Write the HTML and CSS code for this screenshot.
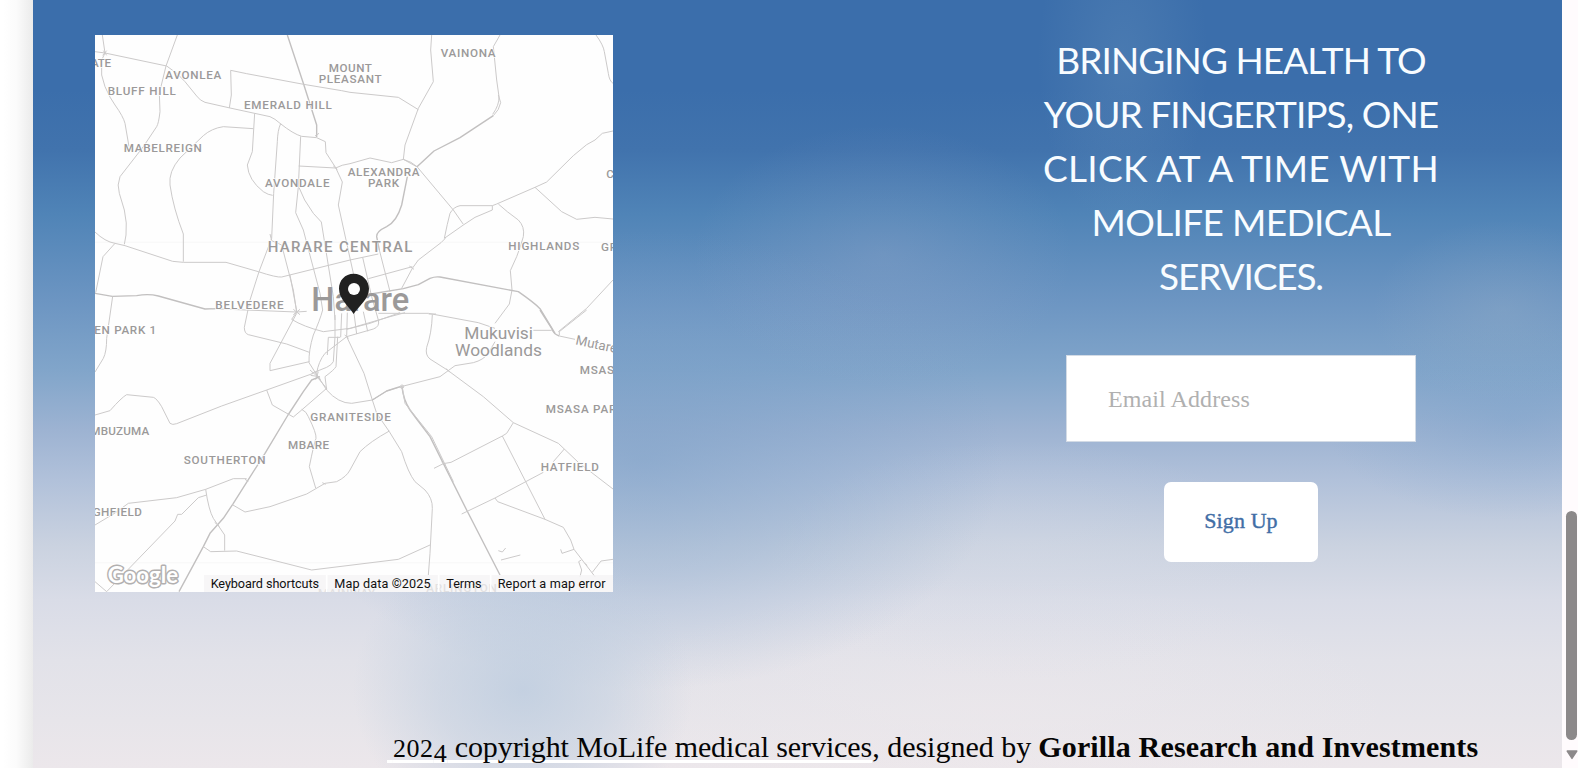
FILE: index.html
```html
<!DOCTYPE html>
<html lang="en">
<head>
<meta charset="utf-8">
<title>MoLife Medical Services</title>
<link rel="stylesheet" href="styles.css">
</head>
<body>
<div class="gutter"></div>
<main class="page">
  <section class="contact">
    <svg class="map" viewBox="15 15 1554 1671" role="img" aria-label="Map of Harare">
      <rect class="land" x="15" y="15" width="1554" height="1671"/>
      <path class="seam" d="M15 637H1569M15 1598H1569"/>
      <!-- north-west roads -->
      <g class="road">
        <path d="M37 15L45 69L35 90V135L45 170Q60 205 75 225Q100 260 105 280L117 350"/>
        <path d="M15 65L45 69L230 108Q265 130 285 155L320 198Q330 212 345 217L420 234L540 260Q555 266 570 280Q610 312 635 319L680 323L706 335L708 368L737 413L757 456L745 525L790 730L805 800"/>
        <path d="M262 15L228 108L208 190L210 245Q206 280 200 290L160 350L90 440Q80 465 88 490L103 540Q112 580 108 615L103 643"/>
        <path class="wide" d="M592 15L641 163L680 285V321"/>
        <path d="M418 234L424 195L422 121L470 131L641 163L755 182L780 187L925 202L985 239"/>
        <path d="M494 250L487 365L472 405Q475 450 520 485Q535 495 548 496"/>
        <path d="M490 296L400 290Q365 295 340 317L270 384Q235 425 240 465Q250 535 280 612V695"/>
        <path d="M572 281Q563 300 562 335L551 490L545 625L507 725L480 810L463 892Q463 910 475 914L590 942L658 967"/>
        <path d="M632 319L625 470L617 548L640 600L690 790L698 840Q690 870 670 915Q656 960 657 998L690 1050"/>
        <path d="M626 408L737 414Q755 404 780 401L840 384L905 398L940 388L980 410"/>
        <path d="M626 470Q640 510 670 550L694 576L730 800L735 870"/>
        <path d="M15 606Q45 635 75 640L105 647L248 694L280 697H408L505 725Q560 743 575 741L780 690L865 672"/>
        <path d="M75 640L39 680L17 788"/>
        <path class="wide" d="M15 790L67 799L140 797Q175 790 205 798L345 837L375 836"/>
        <path d="M365 836L620 846L650 844"/>
        <path d="M68 799L50 925Q50 965 40 985L15 1026"/>
        <path d="M540 612L545 632L575 645L610 780L620 846L605 868Q640 890 700 905L780 895L900 860L945 848"/>
        <path d="M40 62l10 14M50 62L38 76M610 838l20 16M630 838l-20 16M675 318l12-8M730 408l12 10"/>
      </g>
      <!-- north-east roads -->
      <g class="road" transform="translate(780 0)">
        <path d="M245 15L242 60L250 155L205 235L165 345L160 388Q185 395 201 410L310 540L340 583"/>
        <path d="M450 15L430 50L440 150L447 200Q448 225 428 253"/>
        <path d="M445 195L452 218Q448 240 430 257"/>
        <path class="wide" d="M430 257L330 323L252 363L201 410"/>
        <path d="M738 15Q760 45 763 65L775 130Q778 153 789 160"/>
        <path class="wide" d="M172 440L155 525Q140 575 110 590Q78 605 80 620L88 660"/>
        <path d="M88 660L120 785"/>
        <path d="M789 303L757 310L735 330L710 344L670 377L590 456L555 472L440 522L427 527H330Q310 531 300 550Q292 580 283 625L340 585L375 562L427 540V527"/>
        <path d="M286 625L273 638L205 690L187 715L155 775"/>
        <path d="M555 472L635 545L680 568L735 562L789 567"/>
        <path d="M445 522Q470 545 505 570Q525 590 520 620Q510 655 500 680L481 722L486 780L478 822L435 880"/>
        <path class="wide" d="M45 795L160 776L205 764L240 745Q255 739 270 741L505 785Q555 820 570 836L615 910"/>
        <path d="M789 750L710 835L625 905"/>
        <path d="M187 710L55 746"/>
      </g>
      <!-- city centre -->
      <g class="road" transform="translate(600 600)">
        <path d="M0 135L20 243"/>
        <path d="M218 82L245 200L265 270Q270 290 250 297L170 320L105 370Q85 395 80 430"/>
        <path d="M192 250L200 312M220 245L233 304M155 250L152 322M172 248L170 320M135 255V320L130 395Q125 405 110 412L65 430"/>
        <path d="M143 320L138 410Q132 420 105 440L110 480"/>
        <path d="M150 322H115L112 375"/>
        <path d="M170 298L240 280L330 248M185 188L145 200"/>
        <path d="M170 320L222 430L247 510L260 550L298 605"/>
        <path d="M60 420l32 28M62 436l25 4M85 425l-8 24M358 108l14 10M164 315l12 10"/>
      </g>
      <!-- south-west roads -->
      <g class="road" transform="translate(0 840)">
        <path class="wide" d="M690 200L665 210L640 245L594 315L525 430L430 580L400 625L360 670L340 710L267 845"/>
        <path d="M620 10L540 160V182L658 155"/>
        <path d="M15 315L60 302Q95 262 110 254L190 262Q200 265 215 290L240 340Q247 346 260 341L395 288L530 240L670 190"/>
        <path d="M530 240L547 285L610 321L635 300L710 235L685 205"/>
        <path d="M675 185L710 240Q745 280 785 280L847 270L890 243L937 229L1050 200L1095 167L1150 158Q1180 150 1195 130L1215 95"/>
        <path d="M635 298Q650 305 655 320Q680 370 678 385Q672 400 658 470L677 534"/>
        <path d="M427 584L465 606L540 590L650 552L705 520L740 515Q770 500 780 480L810 425Q840 395 898 363"/>
        <path d="M470 506H430L347 538L260 563L115 580L75 609L15 645"/>
        <path d="M350 555L325 563L275 613H263L255 633L50 845L15 815"/>
        <path d="M347 538Q356 600 370 625L404 675V722"/>
        <path d="M340 710L362 725L440 723L665 780L925 748L1020 705"/>
        <path d="M465 508l10 6M374 637l14 12M697 518l10 5"/>
      </g>
      <!-- south-east roads -->
      <g class="road" transform="translate(780 840)">
        <path class="wide" d="M570 0L605 55Q610 72 628 78"/>
        <path d="M628 78L675 88"/>
        <path d="M628 75V65L710 0M550 61H605"/>
        <path d="M85 10H235L385 38L435 55"/>
        <path d="M247 14Q245 70 230 112Q225 135 240 147L292 180L400 260L490 338L625 400L685 457L789 537"/>
        <path d="M490 338L470 370L457 378L303 457L280 461L252 475"/>
        <path class="wide" d="M156 230Q160 270 180 300L200 327L240 380L280 460L350 600L450 795"/>
        <path d="M156 230L165 280L245 380L310 515"/>
        <path class="wide" d="M67 270L110 243L150 230"/>
        <path d="M457 378L585 628"/>
        <path d="M335 612L435 564L580 487M610 455L643 417M435 564L443 575L585 628L640 652L662 690L672 718L636 730L632 718"/>
        <path d="M118 365L155 425Q175 490 195 515L225 540Q248 565 247 595L240 730L235 795"/>
        <path d="M672 718L735 800M686 755L695 780L690 800M789 748L753 753L727 787M445 722l12 4l10-12M453 750L511 735M686 755l8-5M705 760l6 6"/>
        <circle cx="156" cy="230" r="5"/><path d="M236 12h22M288 176l10 9M275 456l12 9"/>
      </g>
      <g class="suburb">
        <text x="3" y="110" textLength="63">ATE</text>
        <text x="226" y="146" textLength="170">AVONLEA</text>
        <text x="53" y="196" textLength="207">BLUFF HILL</text>
        <text x="716" y="125" textLength="132">MOUNT</text>
        <text x="686" y="159" textLength="191">PLEASANT</text>
        <text x="1052" y="82" textLength="167">VAINONA</text>
        <text x="462" y="237" textLength="266">EMERALD HILL</text>
        <text x="101" y="366" textLength="237">MABELREIGN</text>
        <text x="525" y="472" textLength="196">AVONDALE</text>
        <text x="773" y="438" textLength="218">ALEXANDRA</text>
        <text x="834" y="472" textLength="96">PARK</text>
        <text x="1549" y="444">C</text>
        <text x="1255" y="660" textLength="215">HIGHLANDS</text>
        <text x="1533" y="663">GR</text>
        <text x="376" y="837" textLength="207">BELVEDERE</text>
        <text x="13" y="912" textLength="188">EN PARK 1</text>
        <text x="1469" y="1032">MSAS</text>
        <text x="1367" y="1149">MSASA PAR</text>
        <text x="1" y="1214" textLength="179">MBUZUMA</text>
        <text x="661" y="1173" textLength="244">GRANITESIDE</text>
        <text x="594" y="1256" textLength="126">MBARE</text>
        <text x="281" y="1301" textLength="248">SOUTHERTON</text>
        <text x="1352" y="1323" textLength="177">HATFIELD</text>
        <text x="8" y="1457" textLength="150">GHFIELD</text>
        <text x="684" y="1702" textLength="174">MAINWAY</text>
        <text x="1009" y="1686" textLength="214">ARLINGTON</text>
      </g>
      <text class="district" x="533" y="667" textLength="437">HARARE CENTRAL</text>
      <text class="city" x="664" y="843" textLength="294" lengthAdjust="spacingAndGlyphs">Harare</text>
      <g class="park">
        <text x="1123" y="926" textLength="206">Mukuvisi</text>
        <text x="1095" y="978" textLength="261">Woodlands</text>
        <text class="street" transform="translate(1455 943) rotate(12)">Mutare</text>
      </g>
      <path class="pin" d="M791 731C765 731 747 751 747 776C747 807 776 828 791 852C806 828 837 807 837 776C837 751 817 731 791 731Z"/>
      <circle class="pin-eye" cx="792" cy="777" r="18"/>
      <text class="brand" x="53" y="1658" textLength="211" lengthAdjust="spacingAndGlyphs">Google</text>
      <path class="strip" d="M342 1635H1569V1686H342Z"/>
      <path class="gap" d="M710 1635V1686M1046 1635V1686M1202 1635V1686"/>
      <g class="legal">
        <text x="362" y="1675" textLength="325">Keyboard shortcuts</text>
        <text x="733" y="1675" textLength="289">Map data ©2025</text>
        <text x="1069" y="1675" textLength="106">Terms</text>
        <text x="1223" y="1675" textLength="324">Report a map error</text>
      </g>
    </svg>
    <form class="signup">
      <h2 class="headline">
        <span class="l1">BRINGING HEALTH TO</span>
        <span class="l2">YOUR FINGERTIPS, ONE</span>
        <span class="l3">CLICK AT A TIME WITH</span>
        <span class="l4">MOLIFE MEDICAL</span>
        <span class="l5">SERVICES.</span>
      </h2>
      <div class="field">Email Address</div>
      <div class="button">Sign Up</div>
    </form>
  </section>
  <footer class="footer"><span class="copy">&#8201;<span class="old">202</span><span class="old low">4</span> copyright MoLife medical services</span><span class="by">, designed by</span> <b class="credit">Gorilla Research and Investments</b></footer>
</main>
<div class="scrollbar"><div class="thumb"></div><svg class="arrow" viewBox="0 0 12 10"><path d="M1.2 1H10.8L6 8.4Z"/></svg></div>
</body>
</html>
```
FILE: styles.css
```css
* { box-sizing: border-box; }
body { margin: 0; display: flex; width: 1578px; height: 768px; overflow: hidden; background: #fff; }
.gutter { width: 33px; background: linear-gradient(90deg, #fff 8%, #fbfbfb 50%, #f3f3f3 75%, #ebebeb); }
.page {
  width: 1529px; display: flex; flex-direction: column;
  background:
    radial-gradient(ellipse 85px 170px at 1090px 60px, rgba(120,160,195,.24), transparent),
    radial-gradient(ellipse 190px 130px at 850px 255px, rgba(165,175,205,.25), transparent),
    radial-gradient(ellipse 130px 90px at 1470px 310px, rgba(160,180,200,.28), transparent),
    radial-gradient(ellipse 190px 100px at 1480px 420px, rgba(110,155,200,.3), transparent),
    radial-gradient(ellipse 170px 150px at 490px 690px, rgba(185,202,222,.75), rgba(190,205,223,.5) 50%, transparent),
    radial-gradient(ellipse 360px 230px at 610px 460px, rgba(115,155,197,.5), rgba(120,158,200,.3) 50%, transparent),
    radial-gradient(ellipse 260px 120px at 990px 560px, rgba(215,220,231,.3), transparent),
    radial-gradient(ellipse 400px 130px at 960px 710px, rgba(238,233,236,.5), transparent),
    linear-gradient(#3b6eab 0, #3b6eab 90px, #4173ad 150px, #5084b7 215px, #6c95c2 300px, #81a5ca 370px, #9db3d2 430px, #b1c1da 480px, #cad2e0 545px, #d9dce7 600px, #e2e2e9 660px, #e7e5ea 720px, #ece7eb 768px);
}
.contact { display: flex; justify-content: space-between; padding: 35px 124px 0 62px; height: 720px; }
.map { width: 518px; height: 557px; display: block; }
.land { fill: #fefefe; }
.seam { stroke: #f5f5f5; stroke-width: 2; }
.road { fill: none; stroke: #cccaca; stroke-width: 3; stroke-linejoin: round; }
.road .wide { stroke: #c2c0c0; stroke-width: 4.2; }
.map text { font-family: Roboto, sans-serif; fill: #9b9999; }
.suburb text, .district, .park text { stroke: #fefefe; stroke-width: 4; paint-order: stroke; }
.map .suburb { font-size: 35px; font-weight: 500; letter-spacing: 2.4px; }
.map .district { font-size: 45px; font-weight: 500; letter-spacing: 3px; }
.map .city { font-size: 98px; font-weight: 500; }
.map .park { font-size: 52px; }
.map .street { font-size: 40px; }
.pin { fill: #212121; }
.pin-eye { fill: #fff; }
.map .brand { font-family: Lato, sans-serif; font-weight: 700; font-size: 68px; fill: #fff; stroke: #b2b0b0; stroke-width: 9; paint-order: stroke; stroke-linejoin: round; }
.strip { fill: #f5f4f5; fill-opacity: .78; }
.gap { stroke: #fff; stroke-width: 5; }
.map .legal text { font-size: 38px; fill: #111; }

.signup { width: 394px; display: flex; flex-direction: column; align-items: center; }
.headline { margin: -2px 0 0; font: 400 37px/54px Lato, sans-serif; color: #f8fcff; text-align: center; white-space: nowrap; }
.headline span { display: block; }
.l1 { letter-spacing: -.97px; }
.l2 { letter-spacing: -.93px; }
.l3 { letter-spacing: .25px; }
.l4 { letter-spacing: -.65px; }
.l5 { letter-spacing: -1.15px; }
.field { width: 350px; height: 87px; margin-top: 52px; padding-left: 41px; border: 1px solid #d3dbe5; background: #fff; font: 24px/87px "Liberation Serif", serif; letter-spacing: .1px; color: #b0b0b0; }
.button { width: 154px; height: 80px; margin-top: 40px; border-radius: 7px; background: #fff; color: #426ea6; font: 22px/78px "Liberation Serif", serif; letter-spacing: .1px; -webkit-text-stroke: .4px #426ea6; text-align: center; }
.footer { display: flex; align-items: baseline; padding: 2px 0 0 354px; font: 30px/50px "Liberation Serif", serif; color: #050505; white-space: pre; height: 48px; }
.copy { letter-spacing: -.1px; text-decoration: underline; text-decoration-color: #fff; text-decoration-thickness: 3px; text-underline-offset: 3px; text-decoration-skip-ink: none; }
.old { font-size: 26px; letter-spacing: .6px; }
.low { position: relative; top: 5px; }
.credit { margin-left: 7px; letter-spacing: .15px; }
.scrollbar { width: 16px; height: 768px; padding: 511px 1px 0 4px; background: #fffbfd; }
.thumb { height: 229px; border-radius: 6px; background: #8c898a; }
.arrow { display: block; width: 12px; height: 10px; margin-top: 10px; fill: #8c898a; stroke: #8c898a; stroke-width: 1.4; stroke-linejoin: round; }
```
